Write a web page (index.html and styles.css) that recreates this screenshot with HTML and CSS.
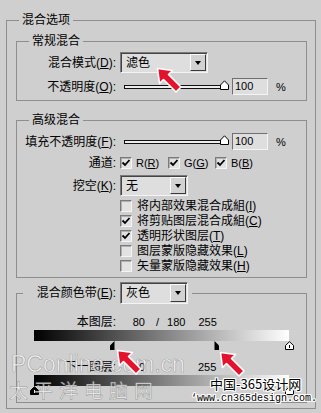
FILE: index.html
```html
<!DOCTYPE html>
<html lang="zh-CN">
<head>
<meta charset="utf-8">
<title>混合选项</title>
<link rel="stylesheet" href="styles.css">
</head>
<body>
<div class="dialog">
  <fieldset class="outer">
    <legend class="leg-outer">混合选项</legend>

    <fieldset class="grp g1">
      <legend class="leg-in">常规混合</legend>
      <div class="row r-mode">
        <span class="lbl">混合模式(<u>D</u>):</span>
        <div class="combo c-mode"><span class="val">滤色</span><span class="btn"></span></div>
      </div>
      <div class="row r-num">
        <span class="lbl">不透明度(<u>O</u>):</span>
        <div class="slider">
          <div class="track"></div>
          <svg class="sthumb" width="9" height="10" viewBox="0 0 9 10"><polygon points="0.5,9.5 0.5,5 4.5,0.8 8.5,5 8.5,9.5" fill="#fff" stroke="#000"/></svg>
        </div>
        <div class="num">100</div>
        <span class="pct">%</span>
      </div>
    </fieldset>

    <fieldset class="grp g2">
      <legend class="leg-in">高级混合</legend>
      <div class="row r-num r-fill">
        <span class="lbl">填充不透明度(<u>F</u>):</span>
        <div class="slider">
          <div class="track"></div>
          <svg class="sthumb" width="9" height="10" viewBox="0 0 9 10"><polygon points="0.5,9.5 0.5,5 4.5,0.8 8.5,5 8.5,9.5" fill="#fff" stroke="#000"/></svg>
        </div>
        <div class="num">100</div>
        <span class="pct">%</span>
      </div>
      <div class="row r-ch">
        <span class="lbl">通道:</span>
        <div class="ch ch-r"><span class="cb on"></span><span class="lat">R(<u>R</u>)</span></div>
        <div class="ch ch-g"><span class="cb on"></span><span class="lat">G(<u>G</u>)</span></div>
        <div class="ch ch-b"><span class="cb on"></span><span class="lat">B(<u>B</u>)</span></div>
      </div>
      <div class="row r-ko">
        <span class="lbl">挖空(<u>K</u>):</span>
        <div class="combo c-small"><span class="val">无</span><span class="btn"></span></div>
      </div>
      <div class="cbrow"><span class="cb"></span><span class="txt">将内部效果混合成組(<u>I</u>)</span></div>
      <div class="cbrow"><span class="cb on"></span><span class="txt">将剪贴图层混合成組(<u>C</u>)</span></div>
      <div class="cbrow"><span class="cb on"></span><span class="txt">透明形状图层(<u>T</u>)</span></div>
      <div class="cbrow"><span class="cb"></span><span class="txt">图层蒙版隐藏效果(<u>L</u>)</span></div>
      <div class="cbrow"><span class="cb"></span><span class="txt">矢量蒙版隐藏效果(<u>H</u>)</span></div>
    </fieldset>

    <fieldset class="grp g3">
      <legend class="leg-band">
        <div class="legrow">
          <span class="lbl lbl-band">混合颜色带(<u>E</u>):</span>
          <div class="combo c-small c-band"><span class="val">灰色</span><span class="btn"></span></div>
        </div>
      </legend>
      <div class="vrow">
        <span class="lbl">本图层:</span>
        <span class="v1">80</span><span class="vs">/</span><span class="v2">180</span><span class="v3">255</span>
      </div>
      <div class="bar"></div>
      <div class="thumbs">
        <svg class="th" style="left:76px" width="5" height="9" viewBox="0 0 5 9"><polygon points="4.5,0 0,4.5 0,9 4.5,9" fill="#000"/></svg>
        <svg class="th" style="left:180px" width="5" height="9" viewBox="0 0 5 9"><polygon points="0.5,0 5,4.5 5,9 0.5,9" fill="#000"/></svg>
        <svg class="th" style="left:251px" width="9" height="9" viewBox="0 0 9 9"><polygon points="0.5,8.5 0.5,4.5 4.5,0.7 8.5,4.5 8.5,8.5" fill="#fff" stroke="#000"/><rect x="4" y="4" width="1" height="3" fill="#000"/></svg>
      </div>
      <div class="vrow vrow2">
        <span class="lbl">下一图层:</span>
        <span class="v1">0</span><span class="v3 v3b">255</span>
      </div>
      <div class="bar"></div>
      <div class="thumbs">
        <svg class="th" style="left:-4px" width="9" height="9" viewBox="0 0 9 9"><polygon points="0.5,8.5 0.5,4.5 4.5,0.7 8.5,4.5 8.5,8.5" fill="#000" stroke="#000"/><rect x="4" y="4" width="1" height="3" fill="#fff"/></svg>
        <svg class="th" style="left:251px" width="9" height="9" viewBox="0 0 9 9"><polygon points="0.5,8.5 0.5,4.5 4.5,0.7 8.5,4.5 8.5,8.5" fill="#fff" stroke="#000"/></svg>
      </div>
    </fieldset>
  </fieldset>
</div>

<div class="wm wm-pc">PConline.com.cn</div>
<div class="wm wm-cn">太平洋电脑网</div>
<div class="wm2 wm-365">中国-365设计网</div>
<div class="wm2 wm-url">‘www.cn365design.com.</div>

<svg class="arrow a1" width="27" height="27" viewBox="0 0 27 27"><polygon points="1.5,1.5 16.5,3.5 12.5,7.5 25,20 20,25 7.5,12.5 3.5,16.5" fill="#e3132d" stroke="#fff" stroke-width="1.6" stroke-linejoin="round"/></svg>
<svg class="arrow a2" width="27" height="27" viewBox="0 0 27 27"><polygon points="1.5,1.5 16.5,3.5 12.5,7.5 25,20 20,25 7.5,12.5 3.5,16.5" fill="#e3132d" stroke="#fff" stroke-width="1.6" stroke-linejoin="round"/></svg>
<svg class="arrow a3" width="27" height="27" viewBox="0 0 27 27"><polygon points="1.5,1.5 16.5,3.5 12.5,7.5 25,20 20,25 7.5,12.5 3.5,16.5" fill="#e3132d" stroke="#fff" stroke-width="1.6" stroke-linejoin="round"/></svg>
</body>
</html>
```
FILE: styles.css
```css
* { box-sizing: border-box; }
html, body { margin: 0; padding: 0; }
body {
  width: 321px;
  height: 413px;
  overflow: hidden;
  position: relative;
  background: #cfcfcf;
  color: #000;
  font: 12px/14px "Liberation Sans", "Noto Sans CJK SC", sans-serif;
}
u { text-decoration: underline; text-underline-offset: 1px; }

.dialog { padding-top: 13px; }

fieldset {
  margin: 0;
  min-width: 0;
  border: 1px solid #8e8e8e;
}
legend { line-height: 14px; }

.outer {
  margin: 0 5px 0 6px;
  padding: 7px 8px 5px 9px;
}
.leg-outer { margin-left: 3px; padding: 0 3px; }

.grp { padding: 0; }
.leg-in { margin-left: 12px; padding: 0 3px; }

.g1 { padding: 4px 0 5px 0; }
.g2 { margin-top: 12px; padding: 6px 0 4px 0; }
.g3 { margin-top: 4px; padding: 11px 0 7px 0; }

.row { display: flex; align-items: center; }
.lbl { width: 99px; flex: none; text-align: right; white-space: nowrap; }

.r-mode { height: 21px; }
.r-num { height: 17px; margin-top: 5px; }
.r-fill { margin-top: 0; }
.r-ch { height: 14px; margin-top: 6px; }
.r-ko { height: 21px; margin-top: 5px; }

/* combo box */
.combo {
  display: flex;
  height: 21px;
  margin-left: 4px;
  border: 1px solid;
  border-color: #7a7a7a #f4f4f4 #f4f4f4 #7a7a7a;
  box-shadow: inset 1px 1px 0 #444;
  background: #dedede;
  flex: none;
}
.c-mode { width: 88px; }
.c-small { width: 68px; }
.c-band { height: 22px; }
.combo .val { flex: 1; padding-left: 5px; padding-top: 1px; line-height: 18px; font-size: 12px; }
.combo .btn {
  width: 16px;
  margin: 1px 1px 1px 0;
  background: #d2d2d2;
  border: 1px solid;
  border-color: #fbfbfb #3a3a3a #3a3a3a #fbfbfb;
  display: flex;
  align-items: center;
  justify-content: center;
}
.combo .btn::after {
  content: "";
  border-left: 3.5px solid transparent;
  border-right: 3.5px solid transparent;
  border-top: 4px solid #000;
}

/* slider */
.slider {
  position: relative;
  width: 108px;
  height: 17px;
  margin-left: 4px;
  display: flex;
  align-items: center;
  flex: none;
}
.track {
  margin-left: 4px;
  width: 101px;
  height: 4px;
  border: 1px solid #111;
  background: #ececec;
}
.sthumb { position: absolute; right: -1px; top: 2px; }

.num {
  width: 36px;
  height: 17px;
  margin-left: 4px;
  padding-left: 2px;
  border: 1px solid;
  border-color: #6f6f6f #f4f4f4 #f4f4f4 #6f6f6f;
  background: #dedede;
  font-size: 11px;
  line-height: 15px;
  flex: none;
}
.pct { margin-left: 8px; font-size: 11px; }

/* checkboxes */
.cb {
  width: 12px;
  height: 12px;
  flex: none;
  border: 1px solid;
  border-color: #7a7a7a #f4f4f4 #f4f4f4 #7a7a7a;
  box-shadow: inset 1px 1px 0 #b0b0b0;
  background: #e2e2e2 no-repeat center;
}
.cb.on {
  background-image: url("data:image/svg+xml,%3Csvg xmlns='http://www.w3.org/2000/svg' width='10' height='10' viewBox='0 0 10 10'%3E%3Cpath d='M1.5 4.5 L4 7 L8.5 2' fill='none' stroke='%23000' stroke-width='1.8'/%3E%3C/svg%3E");
}
.ch { display: flex; align-items: center; flex: none; }
.ch-r { width: 48px; margin-left: 4px; }
.ch-g { width: 47px; }
.lat { margin-left: 4px; font-size: 11px; }

.cbrow {
  display: flex;
  align-items: center;
  height: 15px;
  padding-left: 103px;
}
.r-ko + .cbrow { margin-top: 2px; }
.cbrow .txt { margin-left: 5px; white-space: nowrap; }

/* blend band */
.leg-band { margin-left: 6px; padding: 0 4px 0 0; }
.legrow { display: flex; align-items: center; height: 22px; }
.lbl-band { width: 93px; }

.vrow { display: flex; align-items: center; height: 14px; }
.vrow2 { margin-top: 10px; }
.vrow .v1, .vrow .vs, .vrow .v2, .vrow .v3 { font-size: 11px; }
.v1 { width: 29px; text-align: right; flex: none; }
.vs { margin-left: 11px; }
.v2 { margin-left: 8px; }
.v3 { margin-left: 13px; }
.v3b { margin-left: 53px; }

.bar {
  margin: 1px 0 0 17px;
  width: 255px;
  height: 11px;
  background: linear-gradient(90deg, #000, #fff);
}
.thumbs { position: relative; margin-left: 17px; width: 255px; height: 9px; }
.th { position: absolute; top: 0; }

/* watermarks and arrows */
.wm {
  position: absolute;
  color: rgba(255, 255, 255, 0.72);
  -webkit-text-stroke: 0.7px rgba(95, 95, 95, 0.45);
  white-space: nowrap;
}
.wm-pc { left: 11px; top: 351px; font: 23px/27px "Liberation Sans", sans-serif; }
.wm-cn { left: 9px; top: 379px; font: 19px/22px "Noto Sans CJK SC", sans-serif; letter-spacing: 6px; }

.wm2 {
  position: absolute;
  color: #000;
  white-space: nowrap;
  text-shadow: 1px 0 0 #fff, -1px 0 0 #fff, 0 1px 0 #fff, 0 -1px 0 #fff, 1px 1px 0 #fff, -1px -1px 0 #fff, 1px -1px 0 #fff, -1px 1px 0 #fff;
}
.wm-365 { left: 210px; top: 376px; font: 13px/16px "Noto Sans CJK SC", sans-serif; }
.wm-url { left: 191px; top: 393px; font: 10px/11px "Liberation Mono", monospace; }

.arrow { position: absolute; }
.a1 { left: 156px; top: 67px; }
.a2 { left: 116px; top: 349px; }
.a3 { left: 219px; top: 351px; }
```
